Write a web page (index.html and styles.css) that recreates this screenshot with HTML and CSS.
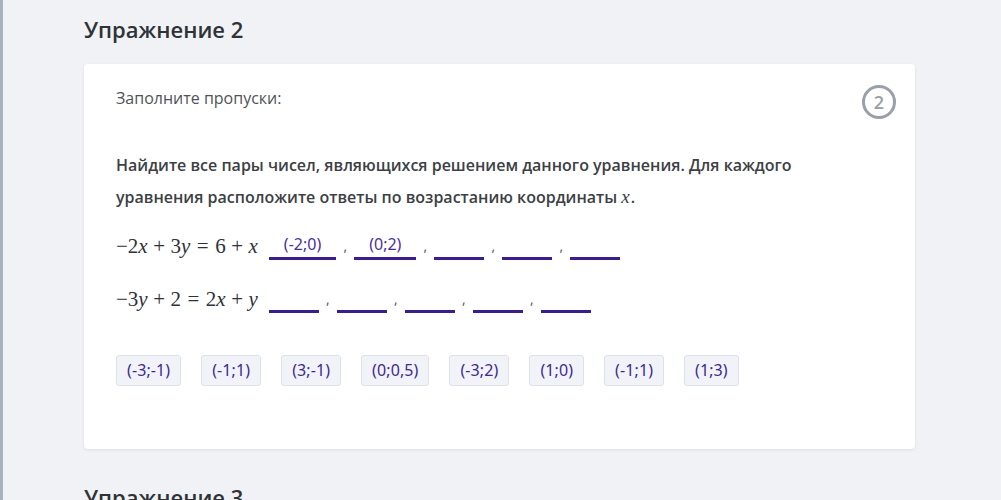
FILE: index.html
```html
<!DOCTYPE html>
<html lang="ru">
<head>
<meta charset="utf-8">
<link rel="stylesheet" href="styles.css">
</head>
<body>
<div class="page">
  <div class="edge"></div>
  <main class="main">
    <h2 class="title">Упражнение 2</h2>
    <section class="card">
      <div class="badge">2</div>
      <p class="hint">Заполните пропуски:</p>
      <p class="task">Найдите все пары чисел, являющихся решением данного уравнения. Для каждого уравнения расположите ответы по возрастанию координаты <span class="mi">x</span>.</p>
      <div class="eq-row">
        <span class="math"><span class="mo">−</span>2<span class="mi">x</span><span class="mb">+</span>3<span class="mi">y</span><span class="mr">=</span>6<span class="mb">+</span><span class="mi">x</span></span>
        <span class="blanks">
          <span class="blank filled">(-2;0)</span><span class="comma">,</span>
          <span class="blank filled">(0;2)</span><span class="comma">,</span>
          <span class="blank"></span><span class="comma">,</span>
          <span class="blank"></span><span class="comma">,</span>
          <span class="blank"></span>
        </span>
      </div>
      <div class="eq-row">
        <span class="math"><span class="mo">−</span>3<span class="mi">y</span><span class="mb">+</span>2<span class="mr">=</span>2<span class="mi">x</span><span class="mb">+</span><span class="mi">y</span></span>
        <span class="blanks">
          <span class="blank"></span><span class="comma">,</span>
          <span class="blank"></span><span class="comma">,</span>
          <span class="blank"></span><span class="comma">,</span>
          <span class="blank"></span><span class="comma">,</span>
          <span class="blank"></span>
        </span>
      </div>
      <div class="chips">
        <span class="chip">(-3;-1)</span>
        <span class="chip">(-1;1)</span>
        <span class="chip">(3;-1)</span>
        <span class="chip">(0;0,5)</span>
        <span class="chip">(-3;2)</span>
        <span class="chip">(1;0)</span>
        <span class="chip">(-1;1)</span>
        <span class="chip">(1;3)</span>
      </div>
    </section>
    <h2 class="title next">Упражнение 3</h2>
  </main>
</div>
</body>
</html>
```

FILE: styles.css
```css
html, body {
  margin: 0;
  padding: 0;
  background: #f0f2f5;
  overflow: hidden;
}
.page {
  display: flex;
  height: 500px;
  overflow: hidden;
  font-family: "Open Sans", "Noto Sans", sans-serif;
}
.edge {
  width: 3px;
  background: #a9b1c1;
  flex: none;
}
.main {
  padding-left: 81px;
  width: 831px;
}
.title {
  margin: 14px 0 0;
  font-size: 22px;
  line-height: 30px;
  font-weight: 600;
  color: #2f3237;
}
.title.next {
  margin-top: 33px;
}
.card {
  position: relative;
  margin-top: 20px;
  background: #fff;
  border-radius: 4px;
  box-shadow: 0 1px 3px rgba(40, 50, 70, 0.10);
  padding: 23px 32px 63px;
  height: 385px;
  box-sizing: border-box;
}
.badge {
  position: absolute;
  top: 21px;
  right: 19px;
  width: 28px;
  height: 28px;
  border: 3px solid #9aa0a9;
  border-radius: 50%;
  display: flex;
  align-items: center;
  justify-content: center;
  font-size: 18px;
  font-weight: 600;
  color: #9aa0a9;
}
.hint {
  margin: 0;
  font-size: 16px;
  line-height: 22px;
  color: #505358;
}
.task {
  margin: 40px 0 0;
  font-size: 16px;
  line-height: 32px;
  font-weight: 600;
  color: #3d4045;
  width: 700px;
}
.task .mi {
  font-family: "Liberation Serif", serif;
  font-style: italic;
  font-weight: 400;
  font-size: 19px;
  line-height: 20px;
  margin-right: 1px;
}
.eq-row {
  display: flex;
  align-items: flex-end;
  margin-top: 19px;
  height: 28px;
}
.eq-row + .eq-row {
  margin-top: 25px;
}
.math {
  font-family: "Liberation Serif", serif;
  font-size: 21px;
  color: #2f3237;
  white-space: pre;
  line-height: 24px;
  padding-bottom: 2px;
  margin-right: 11px;
}
.math .mi {
  font-style: italic;
}
.math .mb {
  margin: 0 5.5px;
}
.math .mr {
  margin: 0 6.5px;
}
.blanks {
  display: flex;
  align-items: flex-end;
}
.blank {
  display: inline-block;
  min-width: 50px;
  height: 26px;
  border-bottom: 3px solid #3b1d8e;
  box-sizing: border-box;
  text-align: center;
  font-size: 16px;
  line-height: 20px;
  color: #4a2ea3;
  font-family: "Noto Sans", "Open Sans", sans-serif;
}
.blank.filled {
  padding: 0 15px;
}
.comma {
  width: 18px;
  text-align: center;
  font-size: 14px;
  line-height: 20px;
  color: #555;
  padding-bottom: 4px;
}
.chips {
  display: flex;
  gap: 20px;
  margin-top: 42px;
}
.chip {
  display: inline-block;
  height: 31px;
  box-sizing: border-box;
  padding: 0 10px;
  border: 1px solid #dde1e8;
  border-radius: 3px;
  background: #f1f3f8;
  font-size: 16px;
  line-height: 29px;
  letter-spacing: 0.1px;
  color: #3e2a92;
  font-family: "Noto Sans", "Open Sans", sans-serif;
}
```
